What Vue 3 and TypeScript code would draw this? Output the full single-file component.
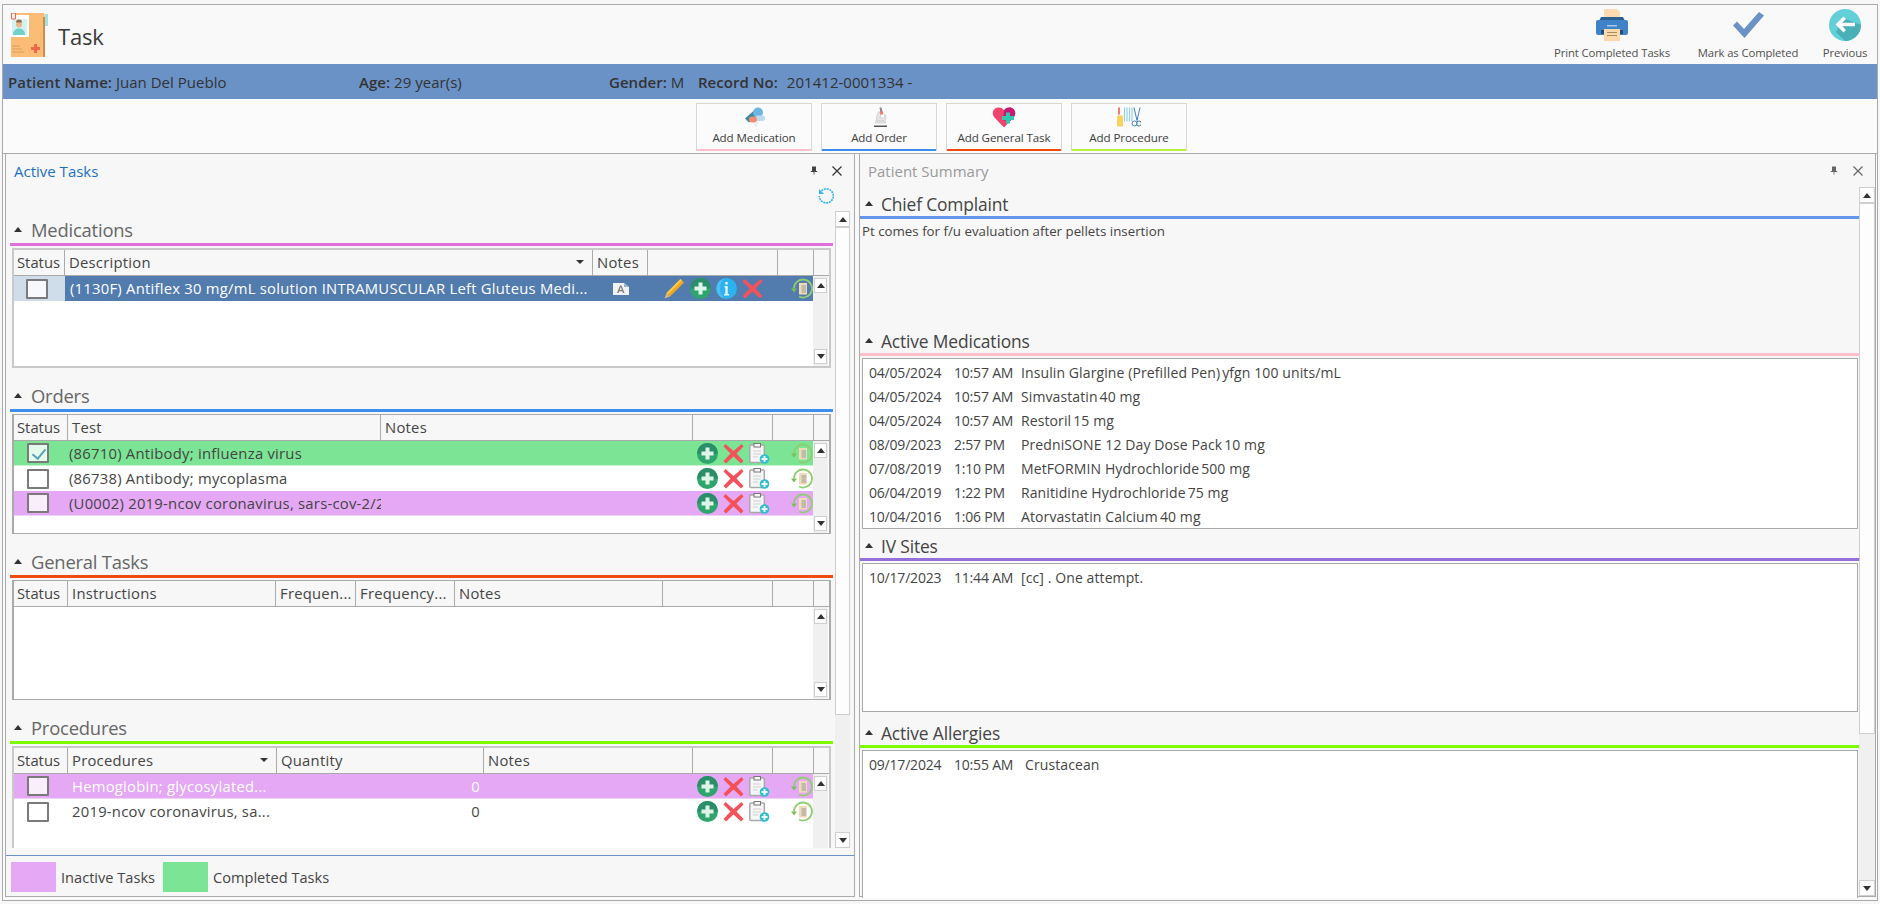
<script setup lang="ts">
interface Row {
  tone: string
  checked?: boolean
  text: string
  qty?: string
}
const medRow: Row = { tone: 'selected', text: '(1130F) Antiflex 30 mg/mL solution INTRAMUSCULAR Left Gluteus Medi...' }
const orderRows: Row[] = [
  { tone: 'done', checked: true, text: '(86710) Antibody; influenza virus' },
  { tone: 'plain', text: '(86738) Antibody; mycoplasma' },
  { tone: 'inactive', text: '(U0002) 2019-ncov coronavirus, sars-cov-2/2' }
]
const procRows: Row[] = [
  { tone: 'inactive light', text: 'Hemoglobin; glycosylated...', qty: '0' },
  { tone: 'plain', text: '2019-ncov coronavirus, sa...', qty: '0' }
]
const meds = [
  ['04/05/2024', '10:57 AM', 'Insulin Glargine (Prefilled Pen)', 'yfgn 100 units/mL'],
  ['04/05/2024', '10:57 AM', 'Simvastatin', '40 mg'],
  ['04/05/2024', '10:57 AM', 'Restoril', '15 mg'],
  ['08/09/2023', '2:57 PM', 'PredniSONE 12 Day Dose Pack', '10 mg'],
  ['07/08/2019', '1:10 PM', 'MetFORMIN Hydrochloride', '500 mg'],
  ['06/04/2019', '1:22 PM', 'Ranitidine Hydrochloride', '75 mg'],
  ['10/04/2016', '1:06 PM', 'Atorvastatin Calcium', '40 mg']
]
</script>

<template>
  <svg class="sprite" aria-hidden="true">
    <defs>
      <symbol id="i-plus" viewBox="0 0 21 21">
        <circle cx="10.5" cy="10.5" r="10.5" fill="#2ea56c" />
        <path d="M0 10.5a10.5 10.5 0 0 1 21 0z" fill="#2a8f68" />
        <path d="M8.5 4.5h4v4h4v4h-4v4h-4v-4h-4v-4h4z" fill="#dff3e8" />
      </symbol>
      <symbol id="i-x" viewBox="0 0 21 21">
        <path d="M2.5 1 10.5 8 18.500 1 20.500 3.500 13.500 10.500 20.500 18 18 20.500 10.500 13.500 3 20.500 .5 18 7.500 10.500 .5 3.500z" fill="#f4525a" />
      </symbol>
      <symbol id="i-info" viewBox="0 0 21 21">
        <circle cx="10.500" cy="10.500" r="10.500" fill="#2db2f0" />
        <path d="M9 .2a10.500 10.500 0 0 0 0 20.600c-3-2-5-5.500-5-10.300S6 2.200 9 .2z" fill="#4cc1f5" />
        <path d="M9.300 4h2.400v2.500H9.300zM8.500 8h3.200v8h1.300v1.500H8V16h1.300V9.500h-.8z" fill="#eaf8ff" />
      </symbol>
      <symbol id="i-pencil" viewBox="0 0 21 21">
        <path d="M16.500 1 20 4.500 6 18.500 2.500 15z" fill="#f0a81e" />
        <path d="M16.500 1 18 2.500 4 16.500 2.500 15z" fill="#f8c94a" />
        <path d="M2.500 15 6 18.500 .5 20.500z" fill="#d9b58a" />
      </symbol>
      <symbol id="i-note" viewBox="0 0 16 12">
        <path d="M0 0h11l5 4v8H0z" fill="#f2f2f2" />
        <path d="M11 0v4h5z" fill="#9ab2cf" />
        <path d="M4 10 7 2.500h1.500l3 7.500H10l-.6-1.800H6.200L5.500 10zM6.700 7h2.200L7.800 4z" fill="#7d7d7d" />
      </symbol>
      <symbol id="i-clip" viewBox="0 0 21 21">
        <rect x=".8" y="2" width="14.500" height="17.500" rx="1" fill="#f7f7f7" stroke="#a9a9a9" stroke-width="1.500" />
        <rect x="5" y=".5" width="6.500" height="3.500" fill="#f7f7f7" stroke="#777" />
        <path d="M4 8h8M4 11h8M4 14h5" stroke="#d0d0d0" stroke-width="1.200" />
        <circle cx="15.500" cy="16" r="4.800" fill="#33bccb" />
        <path d="M14.500 13h2v2h2v2h-2v2h-2v-2h-2v-2h2z" fill="#e8fbfd" />
      </symbol>
      <symbol id="i-redo" viewBox="0 0 22 21">
        <path d="M3 10.500A9 9 0 1 1 8 18.560" fill="none" stroke="#8fce70" stroke-width="1.800" />
        <path d="M0 10.500h6L3 14.500z" fill="#79bf5a" />
        <rect x="8" y="5" width="8" height="11.500" fill="#f9d9b0" />
        <rect x="9.500" y="6" width="6.500" height="9.500" fill="#e6dcc6" />
        <path d="M10.500 8h4.500M10.500 10h4.500M10.500 12h4.500M10.500 14h4.500" stroke="#8a8a78" stroke-width=".8" />
      </symbol>
    </defs>
  </svg>

  <div class="frame">
    <header class="top">
      <svg class="logo" viewBox="0 0 40 44" aria-hidden="true">
        <path d="M2 0h33l1 4v40H2z" fill="#fbbd76" />
        <path d="M34 4h2v40h-2z" fill="#c98f52" />
        <path d="M36 1h3v12h-3z" fill="#a4e2de" />
        <rect x="1" y="2" width="19" height="22" fill="#fff" />
        <rect x="3" y="6" width="15" height="16" fill="#d3f2f1" />
        <circle cx="10" cy="11.500" r="3" fill="#e8b98a" />
        <path d="M7 9.500a3 3 0 0 1 6 0z" fill="#9a6a45" />
        <path d="M4 22c0-5 3-6.500 6-6.500s6 1.500 6 6.500z" fill="#72cfc9" />
        <rect x="2.500" y="0" width="4" height="6" rx="1" fill="#fff" stroke="#f0674c" stroke-width="1.200" />
        <path d="M3 33h8M3 36h10M3 39h12" stroke="#d99e5f" stroke-width="1" />
        <path d="M25 31h3v3h3v3h-3v3h-3v-3h-3v-3h3z" fill="#f0674c" />
      </svg>
      <h1 class="title">Task</h1>
      <nav class="tools">
        <div class="tool print">
          <svg viewBox="0 0 32 32" aria-hidden="true">
            <path d="M8 0h13l3 3v10H8z" fill="#fddbb0" />
            <path d="M5 8h22l2 4H3z" fill="#2c5f92" />
            <rect y="11" width="32" height="15" rx="2" fill="#3f82c8" />
            <rect x="11" y="16" width="10" height="1.500" fill="#a7c8e8" />
            <rect x="5" y="21" width="22" height="4" fill="#264d75" />
            <rect x="8" y="20" width="16" height="12" fill="#fdd8a8" />
            <path d="M11 23.500h10M11 26.500h10" stroke="#a88a60" stroke-width="1" />
          </svg>
          <span>Print Completed Tasks</span>
        </div>
        <div class="tool done">
          <svg viewBox="0 0 32 26" aria-hidden="true">
            <path d="M1 13.500 5 9.500 12 17 27 0 32 3.500 12.500 26z" fill="#6a92c6" />
          </svg>
          <span>Mark as Completed</span>
        </div>
        <div class="tool prev">
          <svg viewBox="0 0 32 32" aria-hidden="true">
            <circle cx="16" cy="16" r="16" fill="#63d0d8" />
            <path d="M14 9 32 16a16 16 0 0 1-16 16l-9-9z" fill="#49b0b8" />
            <path d="M14.500 7.500 6.500 15.500 14.500 23.500l2.500-2.500-3.800-3.800H26v-3.500H13.200L17 10z" fill="#fff" />
          </svg>
          <span>Previous</span>
        </div>
      </nav>
    </header>

    <div class="patient">
      <span class="fld f-name"><b>Patient Name:</b> Juan Del Pueblo</span>
      <span class="fld f-age"><b>Age:</b> 29 year(s)</span>
      <span class="fld f-gender"><b>Gender:</b> M</span>
      <span class="fld f-rec"><b>Record No:</b><i>201412-0001334 -</i></span>
    </div>

    <div class="adds">
      <button class="add pink">
        <svg viewBox="0 0 24 20" aria-hidden="true">
          <path d="M3 11 12 3l3 5-8 7z" fill="#3d8a9c" />
          <circle cx="16" cy="5" r="5" fill="#6db6e4" />
          <rect x="13" y="8" width="10" height="5.500" rx="2.700" fill="#b9dcef" />
          <rect x="7" y="9" width="8" height="6" rx="3" fill="#f58b70" />
          <path d="M13 16v1M15 15v1M14 18v1" stroke="#88c2dd" stroke-width="1" />
        </svg>
        <span>Add Medication</span>
      </button>
      <button class="add blue">
        <svg viewBox="0 0 24 20" aria-hidden="true">
          <path d="M12.500 0h2l1.500 6h-2.500z" fill="#8a8a8a" />
          <path d="M11.500 4 9.500 9v4h8c1.500-1 2-3 1-5l-1-1.500.5 4h-5l1-5z" fill="#e6e6e6" stroke="#bbb" stroke-width=".5" />
          <circle cx="14.500" cy="5.500" r="1.800" fill="#f07d70" />
          <rect x="8" y="13" width="11" height="3" fill="#dcdcdc" />
          <rect x="7" y="18" width="13" height="1.500" fill="#555" />
        </svg>
        <span>Add Order</span>
      </button>
      <button class="add red">
        <svg viewBox="0 0 24 20" aria-hidden="true">
          <path d="M12 20 2 9.500C-1 5 2 0 6.500 0 9 0 11 1 12 3c1-2 3-3 5.500-3C22 0 25 5 22 9.500z" fill="#f2426e" />
          <path d="M12 3c1-2 3-3 5.500-3C22 0 25 5 22 9.500L19 13h-8z" fill="#c21a72" />
          <path d="M14 5h4v3.500h4v4h-4V16h-4v-3.500h-4v-4h4z" fill="#2fc9b0" />
        </svg>
        <span>Add General Task</span>
      </button>
      <button class="add lime">
        <svg viewBox="0 0 24 20" aria-hidden="true">
          <rect x="1" y="0" width="2" height="7" fill="#f07d70" />
          <rect x="0" y="8" width="6" height="11" rx="1" fill="#f7d25c" />
          <path d="M7.500 0v14M10 0v14M12.500 0v14M15 0v14" stroke="#8fcdea" stroke-width="1.100" />
          <path d="M17 0l3 13M23 0l-3 13" stroke="#3f80b8" stroke-width="1" />
          <circle cx="17.500" cy="16" r="2.500" fill="none" stroke="#3f80b8" />
          <circle cx="22" cy="16" r="2.500" fill="none" stroke="#3f80b8" />
        </svg>
        <span>Add Procedure</span>
      </button>
    </div>

    <main class="panels">
      <section class="panel left">
        <div class="p-head">
          <span class="p-title active">Active Tasks</span>
          <svg class="pin" viewBox="0 0 10 10" aria-hidden="true"><path d="M2.500 0h5v5.500H9V7H5.500v3h-1V7H1V5.500h1.500z" fill="#444" /></svg>
          <svg class="close" viewBox="0 0 10 10" aria-hidden="true"><path d="M.5.5l9 9M9.500.5l-9 9" stroke="#333" stroke-width="1.200" /></svg>
        </div>
        <div class="refresh-row">
          <svg viewBox="0 0 16 16" aria-hidden="true">
            <path d="M3.500 2.800A7 7 0 1 1 1.300 8" fill="none" stroke="#39b3ee" stroke-width="1.600" stroke-dasharray="2 .8" />
            <path d="M1 1v5h5z" fill="#39b3ee" />
          </svg>
        </div>

        <div class="p-body">
          <div class="sections">
            <div class="sec">
              <h2 class="sec-h"><em class="caret"></em>Medications</h2>
              <div class="bar c-mag"></div>
              <div class="grid thick">
                <div class="g-head cols-med">
                  <div class="th">Status</div>
                  <div class="th">Description<em class="sort"></em></div>
                  <div class="th">Notes</div>
                  <div class="th"></div>
                  <div class="th last"></div>
                </div>
                <div class="g-body">
                  <div class="rows">
                    <div class="row cols-med" :class="medRow.tone">
                      <div class="td chk pale"><span class="box"></span></div>
                      <div class="td txt">{{ medRow.text }}</div>
                      <div class="td center"><svg class="note"><use href="#i-note" /></svg></div>
                      <div class="td acts a-med">
                        <svg class="ic"><use href="#i-pencil" /></svg>
                        <svg class="ic"><use href="#i-plus" /></svg>
                        <svg class="ic"><use href="#i-info" /></svg>
                        <svg class="ic"><use href="#i-x" /></svg>
                      </div>
                      <div class="td redo-med"><svg class="ic redo"><use href="#i-redo" /></svg></div>
                    </div>
                  </div>
                  <div class="sb mini"><i class="btn up"></i><i class="track"></i><i class="btn down"></i></div>
                </div>
              </div>
            </div>

            <div class="sec">
              <h2 class="sec-h"><em class="caret"></em>Orders</h2>
              <div class="bar c-blue"></div>
              <div class="grid">
                <div class="g-head cols-ord">
                  <div class="th">Status</div>
                  <div class="th">Test</div>
                  <div class="th">Notes</div>
                  <div class="th"></div>
                  <div class="th last"></div>
                </div>
                <div class="g-body">
                  <div class="rows">
                    <div v-for="r in orderRows" :key="r.text" class="row cols-ord" :class="r.tone">
                      <div class="td chk"><span class="box" :class="{ on: r.checked }"></span></div>
                      <div class="td txt tight">{{ r.text }}</div>
                      <div class="td"></div>
                      <div class="td acts a-ord">
                        <svg class="ic"><use href="#i-plus" /></svg>
                        <svg class="ic"><use href="#i-x" /></svg>
                        <svg class="ic"><use href="#i-clip" /></svg>
                      </div>
                      <div class="td redo-ord"><svg class="ic redo"><use href="#i-redo" /></svg></div>
                    </div>
                  </div>
                  <div class="sb mini"><i class="btn up"></i><i class="track"></i><i class="btn down"></i></div>
                </div>
              </div>
            </div>

            <div class="sec">
              <h2 class="sec-h"><em class="caret"></em>General Tasks</h2>
              <div class="bar c-red"></div>
              <div class="grid">
                <div class="g-head cols-gen">
                  <div class="th">Status</div>
                  <div class="th">Instructions</div>
                  <div class="th">Frequen...</div>
                  <div class="th">Frequency...</div>
                  <div class="th">Notes</div>
                  <div class="th"></div>
                  <div class="th last"></div>
                </div>
                <div class="g-body">
                  <div class="rows"></div>
                  <div class="sb mini"><i class="btn up"></i><i class="track"></i><i class="btn down"></i></div>
                </div>
              </div>
            </div>

            <div class="sec">
              <h2 class="sec-h"><em class="caret"></em>Procedures</h2>
              <div class="bar c-lime"></div>
              <div class="grid thick clipped">
                <div class="g-head cols-proc">
                  <div class="th">Status</div>
                  <div class="th">Procedures<em class="sort"></em></div>
                  <div class="th">Quantity</div>
                  <div class="th">Notes</div>
                  <div class="th"></div>
                  <div class="th last"></div>
                </div>
                <div class="g-body">
                  <div class="rows">
                    <div v-for="r in procRows" :key="r.text" class="row cols-proc" :class="r.tone">
                      <div class="td chk"><span class="box"></span></div>
                      <div class="td txt">{{ r.text }}</div>
                      <div class="td qty">{{ r.qty }}</div>
                      <div class="td"></div>
                      <div class="td acts a-ord">
                        <svg class="ic"><use href="#i-plus" /></svg>
                        <svg class="ic"><use href="#i-x" /></svg>
                        <svg class="ic"><use href="#i-clip" /></svg>
                      </div>
                      <div class="td redo-ord"><svg class="ic redo"><use href="#i-redo" /></svg></div>
                    </div>
                  </div>
                  <div class="sb mini"><i class="btn up"></i><i class="track"></i></div>
                </div>
              </div>
            </div>
          </div>

          <div class="sb outer-left">
            <i class="btn up"></i>
            <i class="thumb"></i>
            <i class="track"></i>
            <i class="btn down"></i>
          </div>
        </div>

        <footer class="legend">
          <span class="sw inactive"></span><span class="lg">Inactive Tasks</span>
          <span class="sw done"></span><span class="lg">Completed Tasks</span>
        </footer>
      </section>

      <section class="panel right">
        <div class="p-head">
          <span class="p-title muted">Patient Summary</span>
          <svg class="pin" viewBox="0 0 10 10" aria-hidden="true"><path d="M2.500 0h5v5.500H9V7H5.500v3h-1V7H1V5.500h1.500z" fill="#666" /></svg>
          <svg class="close" viewBox="0 0 10 10" aria-hidden="true"><path d="M.5.5l9 9M9.500.5l-9 9" stroke="#666" stroke-width="1.200" /></svg>
        </div>
        <div class="r-body">
          <div class="r-main">
            <h2 class="r-h first"><em class="caret"></em>Chief Complaint</h2>
            <div class="bar c-corn"></div>
            <p class="complaint">Pt comes for f/u evaluation after pellets insertion</p>

            <h2 class="r-h"><em class="caret"></em>Active Medications</h2>
            <div class="bar c-pink"></div>
            <div class="list l-med">
              <div v-for="m in meds" :key="m[2]" class="item">
                <span class="d">{{ m[0] }}</span><span class="t">{{ m[1] }}</span><span class="n">{{ m[2] }}</span><span class="q">{{ m[3] }}</span>
              </div>
            </div>

            <h2 class="r-h iv"><em class="caret"></em>IV Sites</h2>
            <div class="bar c-purple"></div>
            <div class="list l-iv">
              <div class="item"><span class="d">10/17/2023</span><span class="t">11:44 AM</span><span class="n">[cc] . One attempt.</span></div>
            </div>

            <h2 class="r-h al"><em class="caret"></em>Active Allergies</h2>
            <div class="bar c-green"></div>
            <div class="list l-al">
              <div class="item"><span class="d">09/17/2024</span><span class="t">10:55 AM</span><span class="n shift">Crustacean</span></div>
            </div>
          </div>
          <div class="sb outer-right">
            <i class="btn up"></i>
            <i class="thumb"></i>
            <i class="track"></i>
            <i class="btn down"></i>
          </div>
        </div>
      </section>
    </main>
  </div>
</template>

<style>
html, body { margin: 0; background: #f7f7f7; overflow: hidden; }
</style>

<style scoped>
* { box-sizing: border-box; }
.sprite { position: absolute; width: 0; height: 0; }
.frame {
  margin: 4px 0 0 2px; width: 1876px; height: 897px;
  border: 1px solid #aaa; background: #f9f9f9; overflow: hidden;
  font-family: "Open Sans", "Noto Sans", sans-serif; color: #3c3c3c;
  display: flex; flex-direction: column;
}
.top { height: 59px; display: flex; align-items: flex-start; background: #f9f9f9; flex: none; }
.logo { width: 40px; height: 44px; margin: 8px 0 0 6px; flex: none; }
.title { margin: 12px 0 0 9px; font-size: 22px; line-height: 38px; font-weight: 500; letter-spacing: -.2px; color: #3a3a3a; }
.tools { margin-left: auto; display: flex; }
.tool { display: flex; flex-direction: column; align-items: center; font-size: 11.3px; line-height: 16px; color: #505050; letter-spacing: -.1px; white-space: nowrap; }
.tool svg { display: block; height: 32px; width: 32px; margin-top: 4px; margin-bottom: 4px; }
.tool.print { width: 118px; margin-right: 25px; }
.tool.done { width: 104px; margin-right: 22px; }
.tool.done svg { padding: 3px 0; }
.tool.prev { width: 46px; margin-right: 9px; }

.patient { height: 35px; background: #6a92c6; display: flex; align-items: center; font-size: 15px; color: #333; flex: none; letter-spacing: .03px; position: relative; white-space: nowrap; }
.patient b { font-weight: 600; }
.patient i { font-style: normal; margin-left: 9px; }
.fld { flex: none; }
.f-name { width: 356px; padding-left: 5px; }
.f-age { width: 250px; }
.f-gender { width: 89px; }

.adds { height: 55px; display: flex; padding: 4px 0 0 693px; gap: 9px; background: #fbfbfb; flex: none; border-bottom: 1px solid #aaa; }
.add { width: 116px; height: 48px; padding: 3px 0 0; background: #fbfbfb; border: 1px solid #d8d8d8; border-bottom-width: 0; display: flex; flex-direction: column; align-items: center; font: inherit; font-size: 11.600px; color: #3c3c3c; line-height: 16px; letter-spacing: -.1px; white-space: nowrap; }
.add svg { width: 24px; height: 21px; margin-bottom: 2px; }
.add.pink { box-shadow: inset 0 -2px 0 #ffc0cb; }
.add.blue { box-shadow: inset 0 -2px 0 #3b8fee; }
.add.red { box-shadow: inset 0 -2px 0 #f04a10; }
.add.lime { box-shadow: inset 0 -2px 0 #b4f03c; }

.panels { flex: 1; display: flex; gap: 4px; padding: 0 1px 3px 2px; min-height: 0; }
.panel { background: #f7f7f7; border: 1px solid #aaa; border-top: 0; display: flex; flex-direction: column; position: relative; min-height: 0; }
.left { width: 850px; flex: none; }
.right { flex: 1; min-width: 0; }
.p-head { height: 33px; display: flex; align-items: center; flex: none; padding-right: 12px; }
.p-title { font-size: 15px; }
.left .p-title { margin-left: 8px; }
.right .p-title { margin-left: 8px; }
.active { color: #1c6fc0; }
.muted { color: #9a9a9a; }
.pin { width: 8px; height: 9px; margin-left: auto; margin-right: 14px; }
.close { width: 10px; height: 10px; margin-right: 0; }
.right .pin { margin-right: 15px; }
.refresh-row { height: 15px; display: flex; justify-content: flex-end; padding-right: 20px; flex: none; }
.refresh-row svg { width: 16px; height: 16px; margin-top: 1px; }

.p-body { display: flex; height: 646px; flex: none; }
.sections { width: 823px; margin-left: 4px; flex: none; }
.sec-h { margin: 0; height: 41px; padding-left: 21px; padding-top: 15px; font-size: 18.400px; line-height: 26px; font-weight: 400; color: #666; position: relative; letter-spacing: -.2px; }
.caret { position: absolute; left: 4px; width: 0; height: 0; border: 4.500px solid transparent; border-top: 0; border-bottom: 5px solid #333; }
.sec-h .caret { top: 25px; }
.bar { height: 3px; }
.c-mag { background: #e070dd; }
.c-blue { background: #3b8fee; }
.c-red { background: #f04a10; }
.c-lime { background: #7cfc00; }
.c-corn { background: #6495ed; }
.c-pink { background: #ffc0cb; }
.c-purple { background: #9370db; }
.c-green { background: #7cfc00; }

.grid { margin: 2px 2px 0; width: 819px; height: 120px; background: #fff; border: 2px solid #aaa; border-width: 1px 2px 1px 2px; display: flex; flex-direction: column; }
.grid.thick { border: 2px solid #c9c9c9; }
.grid.clipped { border-bottom: 0; height: 102px; background: #fff; }
.g-head { height: 26px; background: #f7f7f7; border-bottom: 1px solid #aaa; flex: none; }
.cols-med, .cols-ord, .cols-gen, .cols-proc { display: grid; }
.cols-med { grid-template-columns: 51px 528px 55px 130px 36px; }
.cols-ord { grid-template-columns: 54px 313px 312px 80px 41px; }
.cols-gen { grid-template-columns: 54px 208px 80px 99px 208px 110px 41px; }
.cols-proc { grid-template-columns: 54px 209px 207px 209px 80px 41px; }
.th { border-right: 1px solid #aaa; padding-left: 4px; font-size: 14.800px; line-height: 25px; color: #444; position: relative; white-space: nowrap; overflow: hidden; letter-spacing: .25px; }
.th:first-child { padding-left: 3px; letter-spacing: 0; }
.sort { position: absolute; right: 8px; top: 10px; width: 0; height: 0; border: 4px solid transparent; border-bottom: 0; border-top: 4px solid #333; }
.g-body { flex: 1; display: flex; min-height: 0; }
.rows { width: 799px; flex: none; }
.row { height: 25px; font-size: 14.800px; line-height: 24px; letter-spacing: .25px; color: #444; }
.row.selected { background: #527bae; color: #fff; }
.row.done { background: #7be495; border-bottom: 1px solid #c8f0d2; }
.row.plain { background: #fff; }
.row.inactive { background: #e4a8f4; border-bottom: 1px solid #f0d4f8; }
.row.light { color: #fff; }
.td { white-space: nowrap; overflow: hidden; min-width: 0; }
.txt { padding-left: 5px; }
.txt.tight { padding-left: 1px; }
.cols-proc .txt { padding-left: 4px; }
.pale { background: #cfdcea; }
.chk { display: flex; justify-content: center; align-items: center; padding-right: 6px; }
.box { width: 22px; height: 20px; border: 2px solid #7a7a7a; background: rgba(255, 255, 255, .8); border-radius: 1px; position: relative; display: block; }
.box.on::after { content: ""; position: absolute; left: 6px; top: 1px; width: 6px; height: 11px; border: solid #5aa0b8; border-width: 0 2px 2px 0; transform: rotate(40deg); }
.center { display: flex; justify-content: center; align-items: center; }
.note { width: 16px; height: 12px; }
.acts { display: flex; align-items: center; gap: 5px; }
.a-med { padding-left: 16px; }
.a-ord { padding-left: 4px; }
.ic { width: 21px; height: 21px; flex: none; display: block; }
.redo { width: 22px; }
.redo-med, .redo-ord { display: flex; align-items: center; }
.redo-med { padding-left: 13px; }
.redo-ord { padding-left: 18px; }
.qty { text-align: right; padding-right: 4px; }

.sb { display: flex; flex-direction: column; background: #f0f0f0; flex: none; }
.sb .btn { display: flex; align-items: center; justify-content: center; background: #fdfdfd; border: 1px solid #cfcfcf; height: 16px; width: 100%; flex: none; }
.sb .btn::after { content: ""; width: 0; height: 0; border: 4px solid transparent; }
.sb .up::after { border-top: 0; border-bottom: 5px solid #333; }
.sb .down::after { border-bottom: 0; border-top: 5px solid #333; }
.sb .track { flex: 1; }
.sb .thumb { display: block; background: #fdfdfd; border: 1px solid #cfcfcf; flex: none; }
.mini { width: 15px; padding: 2px 1px; }
.mini .btn { height: 15px; width: 13px; }
.outer-left { width: 15px; margin: 9px 0 0 2px; height: 637px; }
.outer-left .thumb { height: 488px; }
.outer-right { width: 16px; height: 709px; margin-top: 0; }
.outer-right .thumb { height: 531px; }

.legend { border-top: 1px solid #6a92c6; margin-top: 7px; flex: 1; display: flex; align-items: flex-start; padding: 6px 0 0 5px; font-size: 14.600px; line-height: 30px; color: #444; }
.sw { width: 45px; height: 30px; flex: none; }
.sw.inactive { background: #e4a8f4; }
.sw.done { background: #7be495; margin-left: 8px; }
.lg { margin-left: 5px; }

.r-body { display: flex; flex: 1; min-height: 0; }
.r-main { flex: 1; min-width: 0; }
.r-h { margin: 0; height: 24px; padding-left: 21px; font-size: 17.400px; line-height: 24px; font-weight: 400; color: #444; position: relative; letter-spacing: -.15px; }
.r-h.first { margin-top: 5px; }
.r-h .caret { top: 9px; left: 5px; }
.complaint { margin: 0; height: 110px; padding: 3px 0 0 2px; font-size: 13.300px; line-height: 18px; color: #444; }
.list { margin: 2px 1px 0 2px; background: #fff; border: 1px solid #aaa; padding-left: 6px; }
.l-med { height: 171px; padding-top: 2px; }
.l-iv { height: 149px; padding-top: 2px; }
.l-al { height: 148px; padding-top: 2px; border-bottom: 0; }
.r-h.iv { margin-top: 5px; }
.r-h.al { margin-top: 9px; }
.item { height: 24px; display: flex; font-size: 14px; line-height: 24px; color: #444; white-space: nowrap; }
.d { width: 85px; flex: none; letter-spacing: -.2px; }
.t { width: 67px; flex: none; letter-spacing: -.2px; }
.n { margin-right: 2px; letter-spacing: .1px; }
.q { letter-spacing: .1px; }
.n.shift { margin-left: 4px; }
</style>
